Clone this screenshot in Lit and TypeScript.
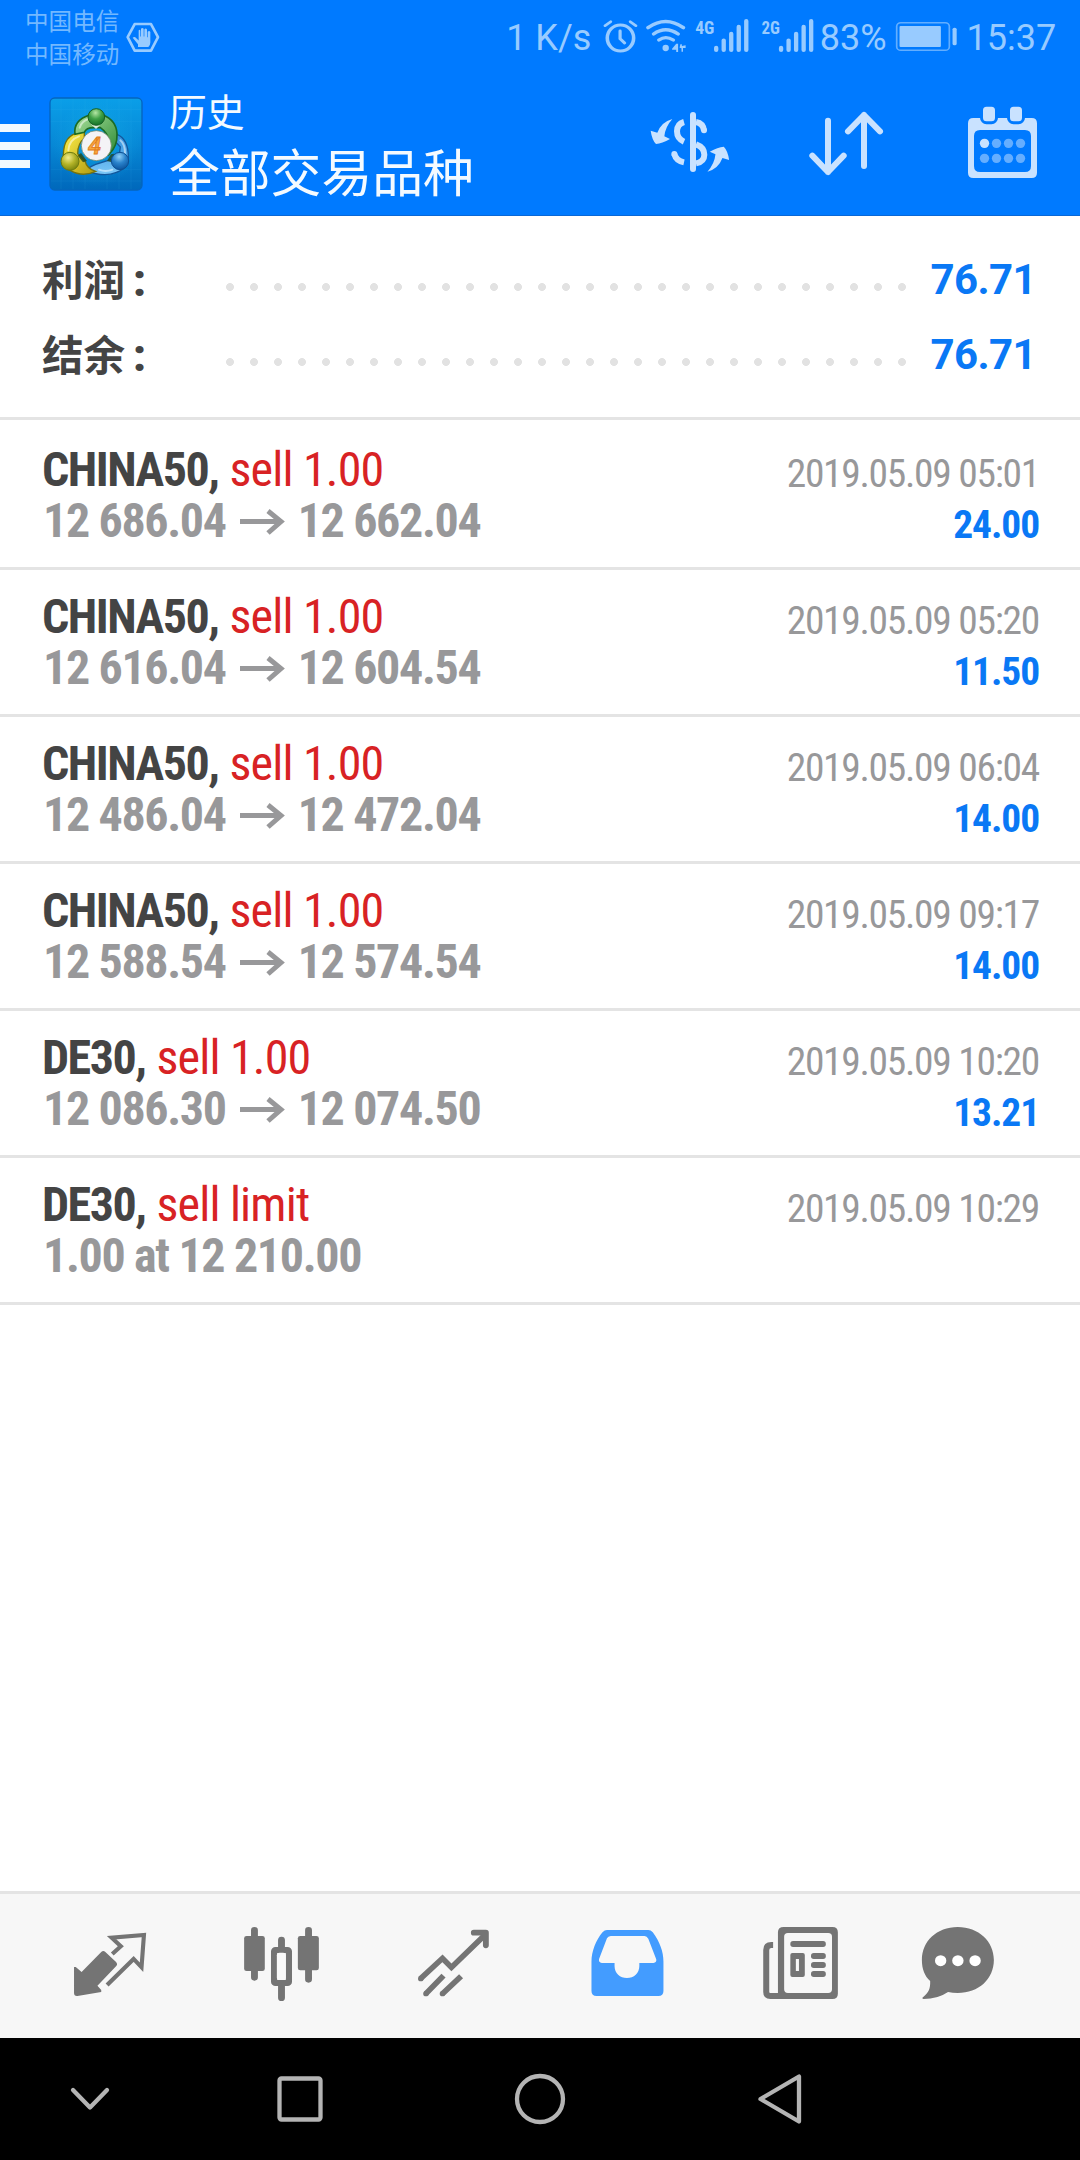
import { LitElement, html, svg, css, nothing } from "lit";
import { customElement, property } from "lit/decorators.js";

interface Deal {
  symbol: string;
  action: string;
  from: string;
  to?: string;
  time: string;
  profit?: string;
}

const DEALS: Deal[] = [
  { symbol: "CHINA50", action: "sell 1.00", from: "12 686.04", to: "12 662.04", time: "2019.05.09 05:01", profit: "24.00" },
  { symbol: "CHINA50", action: "sell 1.00", from: "12 616.04", to: "12 604.54", time: "2019.05.09 05:20", profit: "11.50" },
  { symbol: "CHINA50", action: "sell 1.00", from: "12 486.04", to: "12 472.04", time: "2019.05.09 06:04", profit: "14.00" },
  { symbol: "CHINA50", action: "sell 1.00", from: "12 588.54", to: "12 574.54", time: "2019.05.09 09:17", profit: "14.00" },
  { symbol: "DE30", action: "sell 1.00", from: "12 086.30", to: "12 074.50", time: "2019.05.09 10:20", profit: "13.21" },
  { symbol: "DE30", action: "sell limit", from: "1.00 at 12 210.00", time: "2019.05.09 10:29" },
];

const icon = (cls: string, box: string, body: unknown) =>
  html`<svg class=${cls} viewBox=${box} preserveAspectRatio="none" fill="currentColor">${body}</svg>`;

const signalBars = (x: number) => svg`
  <g stroke="currentColor" stroke-width="11.5" stroke-linecap="round">
    <path d="M${x} 143V150M${x + 20} 121V150M${x + 40} 101V150M${x + 60} 80V150M${x + 80} 63V150"/>
  </g>`;

@customElement("status-bar")
class StatusBar extends LitElement {
  static styles = css`
    :host { display: flex; height: 73px; color: #98cbff; font: 36px/73px Roboto, "Noto Sans", sans-serif; }
    .carriers { width: 94px; padding: 4px 0 0 25px; font: 400 23.6px/32.7px "Noto Sans CJK SC", sans-serif; white-space: nowrap; color: #73b8ff; height: 66px; }
    .shield { width: 34px; height: 31px; margin: 21.5px 0 0 7px; }
    .grow { flex: 1; }
    .speed, .pct, .time { white-space: pre; box-sizing: border-box; margin-top: 2px; }
    .speed { width: 93px; }
    .alarm { width: 43.3px; height: 73px; }
    .wifi { width: 48.9px; height: 73px; }
    .sig1 { width: 65.8px; height: 73px; }
    .sig2 { width: 60.2px; height: 73px; }
    .pct { width: 74.5px; padding-left: 2.5px; }
    .battery { width: 69.2px; height: 73px; }
    .time { width: 119px; padding-left: 5.5px; }
    .gen { font: 700 56px "Roboto Condensed", Roboto, sans-serif; }
  `;
  render() {
    return html`
      <div class="carriers"><div>中国电信</div><div>中国移动</div></div>
      ${icon("shield", "377 64 102 92", svg`
        <path d="M403 70H452L473 109L452 149H403L382 109Z" fill="none" stroke="currentColor" stroke-width="8" stroke-linejoin="round"/>
        <path d="M413 138V130L397 111Q402 105 408 112L415 119V89Q417 85 420 89V107H422V84Q426 79 430 84V107H432V86Q436 81 440 86V109H442V93Q447 88 450 94V125Q450 133 444 138Z"/>`)}
      <span class="grow"></span>
      <span class="speed">1 K/s</span>
      ${icon("alarm", "290 0 115 219", svg`
        <g fill="none" stroke="currentColor" stroke-linecap="round">
          <ellipse cx="347" cy="114" rx="35" ry="39" stroke-width="9.5"/>
          <path d="M346 93V116L358 129" stroke-width="8.5"/>
          <path d="M306 77L321 65M388 77L373 65" stroke-width="8"/>
        </g>`)}
      ${icon("wifi", "405 0 130 219", svg`
        <g fill="none" stroke="currentColor" stroke-width="10" stroke-linecap="round">
          <path d="M421 83Q468 46 515 83M436 102Q468 77 501 102M450 120Q468 106 488 120"/>
        </g>
        <ellipse cx="468" cy="144" rx="8.5" ry="9.5"/>
        <path d="M485 146L496 131H501V156H496V149H485ZM507 133H511V138L521 136V144H514V155H510V145L505 143Z"/>`)}
      ${icon("sig1", "535 0 175 219", svg`
        <text class="gen" x="546" y="101" textLength="51" lengthAdjust="spacingAndGlyphs">4G</text>${signalBars(602)}`)}
      ${icon("sig2", "710 0 160 219", svg`
        <text class="gen" x="722" y="101" textLength="49" lengthAdjust="spacingAndGlyphs">2G</text>${signalBars(774)}`)}
      <span class="pct">83%</span>
      ${icon("battery", "1068 0 184 219", svg`
        <rect x="1080.5" y="68" width="140" height="83" rx="11" fill="none" stroke="currentColor" stroke-width="4.5" opacity=".65"/>
        <rect x="1088" y="78" width="110" height="63" rx="3"/>
        <rect x="1229" y="83" width="11" height="53" rx="5"/>`)}
      <span class="time">15:37</span>`;
  }
}

@customElement("title-bar")
class TitleBar extends LitElement {
  static styles = css`
    :host { display: flex; height: 143px; box-sizing: border-box; border-bottom: 1.5px solid #0a68d6; color: #c9e2ff; }
    .menu { display: flex; flex-direction: column; gap: 10px; width: 30px; padding-top: 51px; }
    .bar { height: 8px; background: #f2f9ff; }
    .logo { width: 94px; height: 94px; margin: 24px 0 0 19px; }
    .names { flex: 1; padding-left: 26px; font-family: "Noto Sans CJK SC", sans-serif; font-weight: 400; color: #f4faff; white-space: nowrap; }
    .page { font-size: 37.8px; line-height: 55px; padding-top: 9px; }
    .filter { font-size: 50.8px; line-height: 66px; }
    .tool { flex: none; width: 160px; height: 110px; margin-top: 17px; }
    .last { width: 151px; }
    .four { font: italic 700 70px Roboto, sans-serif; }
  `;
  render() {
    return html`
      <div class="menu"><i class="bar"></i><i class="bar"></i><i class="bar"></i></div>
      ${icon("logo", "26 20 282 282", svg`
        <defs>
          <linearGradient id="sky" x2="0" y2="1"><stop offset="0" stop-color="#0a9fe8"/><stop offset=".5" stop-color="#0788d6"/><stop offset="1" stop-color="#0068bb"/></linearGradient>
          <radialGradient id="glow" cx=".5" cy=".5" r=".5"><stop offset="0" stop-color="#16c0e8"/><stop offset="1" stop-color="#16b0e8" stop-opacity="0"/></radialGradient>
          <linearGradient id="green" x2="1" y2="1"><stop offset="0" stop-color="#a8df9a"/><stop offset="1" stop-color="#2d8a35"/></linearGradient>
          <linearGradient id="gold" x2="1" y2="1"><stop offset="0" stop-color="#fff04a"/><stop offset="1" stop-color="#b09a10"/></linearGradient>
          <linearGradient id="blue" x2="0" y2="1"><stop offset="0" stop-color="#2f8fdc"/><stop offset="1" stop-color="#7cc8f8"/></linearGradient>
          <radialGradient id="ballG" cx=".45" cy=".25" r=".75"><stop offset="0" stop-color="#b4e6a4"/><stop offset=".5" stop-color="#3fa046"/><stop offset="1" stop-color="#14702a"/></radialGradient>
          <radialGradient id="ballY" cx=".4" cy=".3" r=".75"><stop offset="0" stop-color="#f2ec8c"/><stop offset=".5" stop-color="#b5b429"/><stop offset="1" stop-color="#74800c"/></radialGradient>
          <radialGradient id="ballB" cx=".45" cy=".25" r=".75"><stop offset="0" stop-color="#8fd0f8"/><stop offset=".5" stop-color="#2a83cc"/><stop offset="1" stop-color="#0c559f"/></radialGradient>
        </defs>
        <rect x="29" y="23" width="276" height="276" rx="14" fill="url(#sky)" stroke="#0565bd" stroke-width="4"/>
        <circle cx="167" cy="160" r="130" fill="url(#glow)" opacity=".5"/>
        <path d="M62 25V297M98 25V297M134 25V297M200 25V297M236 25V297M272 25V297M31 58H303M31 94H303M31 238H303M31 272H303" stroke="#4cc4f5" stroke-width="1.5" opacity=".18"/>
        <path d="M135 240Q150 228 166 222L236 200L240 170L222 150L230 132Q264 146 264 200Q262 236 226 247Q190 262 135 240Z" fill="url(#blue)" stroke="#13579c" stroke-width="4"/>
        <path d="M132 124Q75 128 70 180Q64 235 90 240Q126 262 166 243Q140 236 134 212L112 190Q112 160 132 144Z" fill="url(#gold)" stroke="#77720c" stroke-width="4"/>
        <path d="M148 74Q98 90 104 132L132 126Q138 112 160 112H180Q200 126 206 150V192Q232 168 230 130Q228 90 188 74Z" fill="url(#green)" stroke="#1c6b24" stroke-width="5"/>
        <path d="M118 112Q124 92 144 86M84 180Q86 148 116 138M254 188Q254 162 240 150M176 238Q196 246 216 238" stroke="#fff" stroke-width="6" fill="none" opacity=".5" stroke-linecap="round"/>
        <path d="M152 102L167 116L182 102Z" fill="#fff" opacity=".8"/>
        <path d="M112 196L122 188L140 212L128 216ZM212 192L222 190L214 216L200 212Z" fill="#24481c" opacity=".8"/>
        <circle cx="168" cy="80" r="25" fill="url(#ballG)" stroke="#155f22" stroke-width="3"/>
        <circle cx="89" cy="213" r="27" fill="url(#ballY)" stroke="#6d7a10" stroke-width="3"/>
        <circle cx="239" cy="212" r="26" fill="url(#ballB)" stroke="#0e4f92" stroke-width="3"/>
        <circle cx="168" cy="166" r="45" fill="#f4f3f6" stroke="#6d7d5a" stroke-width="2"/>
        <text class="four" x="143" y="191" fill="#f9a83c" stroke="#e07b20" stroke-width="2.5">4</text>`)}
      <div class="names"><div class="page">历史</div><div class="filter">全部交易品种</div></div>
      ${icon("tool", "-33 0 480 330", svg`
        <g fill="none" stroke="currentColor" stroke-width="18">
          <path d="M219 75V237" stroke-linecap="round"/>
          <path d="M192 96Q171 102 171 124Q171 146 192 155"/>
          <path d="M228 96Q250 100 252 122" /><circle cx="252" cy="121" r="9" fill="currentColor" stroke="none"/>
          <path d="M228 163Q253 172 253 194Q253 215 228 220"/>
          <path d="M163 192Q168 212 192 217"/><circle cx="163" cy="192" r="9" fill="currentColor" stroke="none"/>
        </g>
        <path d="M157 87Q124 96 112 128L92 122Q96 150 108 162Q126 161 150 147L133 139Q136 110 157 87Z"/>
        <path d="M157 87Q124 96 112 128L92 122Q96 150 108 162Q126 161 150 147L133 139Q136 110 157 87Z" transform="rotate(180 209.7 166)"/>`)}
      ${icon("tool", "447 0 480 330", svg`
        <path d="M624 92V246M577 197L624 246L671 197M732 228V75M684 124L732 75L780 124" fill="none" stroke="currentColor" stroke-width="18" stroke-linecap="round" stroke-linejoin="round"/>`)}
      ${icon("tool last", "927 0 453 330", svg`
        <path fill-rule="evenodd" d="M1060 84H1235Q1251 84 1251 100V248Q1251 264 1235 264H1060Q1044 264 1044 248V100Q1044 84 1060 84ZM1080 120Q1062 120 1062 138V228Q1062 246 1080 246H1215Q1233 246 1233 228V138Q1233 120 1215 120Z"/>
        <g stroke="#007aff" stroke-width="9"><rect x="1084.500" y="46" width="45" height="52" rx="15"/><rect x="1165.500" y="46" width="45" height="52" rx="15"/></g>
        <circle cx="1093.500" cy="160" r="14"/>
        <g opacity=".5"><circle cx="1129.500" cy="160" r="14"/><circle cx="1165.500" cy="160" r="14"/><circle cx="1201.500" cy="160" r="14"/><circle cx="1093.500" cy="205" r="14"/><circle cx="1129.500" cy="205" r="14"/><circle cx="1165.500" cy="205" r="14"/><circle cx="1201.500" cy="205" r="14"/></g>`)}`;
  }
}

@customElement("summary-line")
class SummaryLine extends LitElement {
  @property() label = "";
  @property() value = "";
  static styles = css`
    :host { display: flex; height: 75px; align-items: center; padding: 0 44px 0 42px; }
    .label { width: 176px; white-space: pre; font: 900 44px/75px Roboto, "Noto Sans CJK SC", sans-serif; color: #444; }
    .cjk { font: 700 41.5px/75px "Noto Sans CJK SC", sans-serif; margin-right: 8px; }
    .dots { width: 696px; height: 8px; margin-top: 14px; background: radial-gradient(circle at center, #e2e2e2 3.6px, transparent 4.3px) 0 0 / 24px 8px repeat-x; }
    .value { flex: 1; text-align: right; font: 700 42px/75px Roboto, sans-serif; letter-spacing: -0.6px; color: #0a78f5; }
  `;
  render() {
    return html`<span class="label"><span class="cjk">${this.label}</span>:</span><span class="dots"></span><span class="value">${this.value}</span>`;
  }
}

@customElement("deal-row")
class DealRow extends LitElement {
  @property({ attribute: false }) deal!: Deal;
  static styles = css`
    :host { display: flex; justify-content: space-between; height: 147px; box-sizing: border-box; border-bottom: 3px solid #e4e4e4; padding: 21px 41px 0 42px; white-space: nowrap; font-family: "Roboto Condensed", Roboto, sans-serif; font-stretch: 75%; }
    .left { font-size: 48px; line-height: 51px; }
    .symbol { font-weight: 700; color: #444; letter-spacing: -1.5px; }
    .action { color: #d82224; letter-spacing: -0.8px; }
    .prices { display: flex; font-weight: 700; color: #98989a; letter-spacing: -1.35px; padding-left: 1px; }
    .arrow { width: 45px; height: 26px; margin: 14px 13px 0 14px; }
    .right { text-align: right; font-size: 39.5px; line-height: 51px; padding-top: 4px; color: #98989a; }
    .date { letter-spacing: -1.3px; }
    .profit { font-weight: 700; color: #0a78f5; letter-spacing: -1.1px; }
  `;
  render() {
    const d = this.deal;
    return html`
      <div class="left">
        <div><span class="symbol">${d.symbol},</span> <span class="action">${d.action}</span></div>
        <div class="prices"><span>${d.from}</span>${d.to
          ? html`<svg class="arrow" viewBox="0 0 45 26"><path d="M0 12.500H42M28 2L41 12.500L28 24" fill="none" stroke="currentColor" stroke-width="5"/></svg><span>${d.to}</span>`
          : nothing}</div>
      </div>
      <div class="right"><div class="date">${d.time}</div>${d.profit ? html`<div class="profit">${d.profit}</div>` : nothing}</div>`;
  }
}

@customElement("tab-bar")
class TabBar extends LitElement {
  static styles = css`
    :host { display: grid; grid-template-columns: 172px 172px 172px 173px 174px 142px; justify-items: center; padding: 0 51px 0 24px; height: 147px; box-sizing: border-box; border-top: 3px solid #e4e4e4; background: #f7f7f7; color: #747474; }
    .tab { width: 80px; height: 144px; }
    .active { color: #439cff; }
  `;
  render() {
    return html`
      ${icon("tab", "203.3 42 232.3 432", svg`
        <path d="M215 261H220L237 276L294 216Q300 210 306 216L337 246Q343 253 337 259L283 317L294 330V336L225 348Q215 349 215 339Z"/>
        <path d="M326 222L351 199L324 173L418 165L411 262L388 237L311 315" fill="none" stroke="currentColor" stroke-width="12"/>`)}
      ${icon("tab", "702.8 42 232.3 432", svg`
        <g fill="none" stroke="currentColor" stroke-width="20" stroke-linecap="round"><path d="M739 151V292M896 151V298M817.500 180V205M817.500 315V353"/></g>
        <rect x="709" y="168" width="60" height="105" rx="7"/><rect x="865" y="168" width="61" height="103" rx="7"/>
        <rect x="796" y="210" width="43" height="99" rx="4" fill="#f9f9f9" stroke="currentColor" stroke-width="18"/>
        <rect x="804" y="218" width="26" height="82" rx="8" fill="#f9f9f9"/>`)}
      ${icon("tab", "1202.3 42 232.3 432", svg`
        <g fill="none" stroke="currentColor" stroke-width="16.500">
          <path d="M1221 296L1285 235L1311 262L1411 162" stroke-linejoin="miter"/><path d="M1376 158H1411V196" stroke-linecap="round" stroke-linejoin="round" stroke-width="17"/>
          <path d="M1237 341L1288 287M1285 341L1339 289"/>
        </g>
        <circle cx="1222" cy="296" r="8"/><circle cx="1237" cy="341" r="8"/><circle cx="1285" cy="341" r="8"/>`)}
      ${icon("tab active", "135 42 232.3 432", svg`
        <path fill-rule="evenodd" d="M193 150H313Q320 150 326 157C346 185 357 215 357 245V333Q357 348 342 348H163Q148 348 148 333V245C148 215 161 180 180 157Q186 150 193 150ZM204 168Q196 169 193 175L170 237Q168 248 178 249H215V258C215 280 231 294 251 294C271 294 287 280 287 258V249H328Q338 248 336 238L313 176Q309 169 302 168Z"/>`)}
      ${icon("tab", "638.9 42 232.3 432", svg`
        <g fill="none" stroke="currentColor" stroke-width="17.500" stroke-linejoin="round">
          <path d="M677 195H672Q657 195 657 210V336Q657 348 669 348H700"/>
          <path stroke="none" fill="currentColor" fill-rule="evenodd" d="M708 141H849Q865 141 865 157V341Q865 357 849 357H675V339H691V157Q691 141 708 141ZM720 159Q709 159 709 170V328Q709 339 720 339H837Q848 339 848 328V170Q848 159 837 159Z"/>
        </g>
        <rect x="727" y="183" width="103" height="18" rx="8"/>
        <rect x="787" y="219" width="43" height="18" rx="8"/><rect x="787" y="246" width="43" height="18" rx="8"/><rect x="787" y="273" width="43" height="18" rx="8"/>
        <path fill-rule="evenodd" d="M733 219H763Q769 219 769 225V285Q769 291 763 291H733Q727 291 727 285V225Q727 219 733 219ZM743 237V273H752V237Z"/>`)}
      ${icon("tab", "1097.7 42 232.3 432", svg`
        <path d="M1213 141C1274 141 1318 184 1318 240C1318 297 1274 339 1213 339Q1198 339 1185 336Q1155 357 1114 357Q1108 356 1112 352C1129 338 1134 325 1133 303C1117 288 1109 267 1109 240C1109 184 1152 141 1213 141Z"/>
        <circle cx="1163.500" cy="242" r="16.500" fill="#fff"/><circle cx="1213.500" cy="242" r="16.500" fill="#fff"/><circle cx="1263.500" cy="242" r="16.500" fill="#fff"/>`)}`;
  }
}

@customElement("nav-keys")
class NavKeys extends LitElement {
  static styles = css`
    :host { display: grid; grid-template-columns: 180px 240px 240px 240px; align-items: center; justify-items: center; height: 122px; background: #000; }
    .key { width: 60px; height: 60px; fill: none; stroke: #b4b4b4; stroke-width: 4.3px; stroke-linejoin: round; stroke-linecap: round; }
  `;
  render() {
    const key = (d: unknown) => html`<svg class="key" viewBox="-30 -30 60 60">${d}</svg>`;
    return html`
      ${key(svg`<path d="M-17 -9L0 8.500L17 -9"/>`)}
      ${key(svg`<rect x="-20.500" y="-20.500" width="41" height="41" rx="2"/>`)}
      ${key(svg`<circle r="23"/>`)}
      ${key(svg`<path d="M-19.500 0L19 -22.500V22.500Z"/>`)}`;
  }
}

@customElement("app-root")
class AppRoot extends LitElement {
  static styles = css`
    :host { display: flex; flex-direction: column; width: 1080px; height: 2160px; background: #fff; overflow: hidden; }
    .head { background: #007aff; }
    .summary { padding: 26px 0 25px; border-bottom: 3px solid #e4e4e4; margin-bottom: 3px; }
    .list { flex: 1; }
  `;
  render() {
    return html`
      <header class="head"><status-bar></status-bar><title-bar></title-bar></header>
      <section class="summary">
        <summary-line label="利润" value="76.71"></summary-line>
        <summary-line label="结余" value="76.71"></summary-line>
      </section>
      <main class="list">${DEALS.map((d) => html`<deal-row .deal=${d}></deal-row>`)}</main>
      <tab-bar></tab-bar>
      <nav-keys></nav-keys>`;
  }
}
